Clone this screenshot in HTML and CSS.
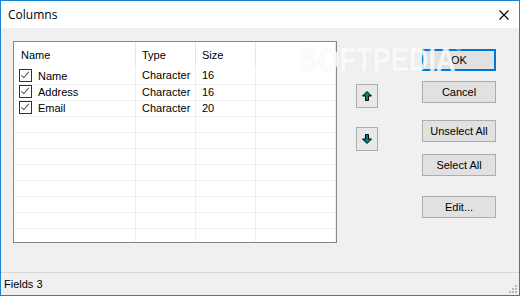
FILE: index.html
```html
<html>
<head>
    <title>Columns</title>
    <link rel="stylesheet" href="styles.css">
</head>
<body>
<div class="window">
    <div class="titlebar">
        <span class="title">Columns</span>
        <svg class="close" width="10" height="10" viewBox="0 0 10 10">
            <path d="M0.5 0.5 L9.5 9.5 M9.5 0.5 L0.5 9.5" stroke="#000" stroke-width="1.1" fill="none"/>
        </svg>
    </div>

    <div class="content">
        <div class="list">
            <table class="grid">
                <tr class="head">
                    <th class="c1">Name</th>
                    <th class="c2">Type</th>
                    <th class="c3">Size</th>
                    <th class="c4"></th>
                </tr>
                <tr>
                    <td class="c1"><span class="check"></span>Name</td>
                    <td class="c2">Character</td>
                    <td class="c3">16</td>
                    <td></td>
                </tr>
                <tr>
                    <td class="c1"><span class="check"></span>Address</td>
                    <td class="c2">Character</td>
                    <td class="c3">16</td>
                    <td></td>
                </tr>
                <tr>
                    <td class="c1"><span class="check"></span>Email</td>
                    <td class="c2">Character</td>
                    <td class="c3">20</td>
                    <td></td>
                </tr>
                <tr><td></td><td></td><td></td><td></td></tr>
                <tr><td></td><td></td><td></td><td></td></tr>
                <tr><td></td><td></td><td></td><td></td></tr>
                <tr><td></td><td></td><td></td><td></td></tr>
                <tr><td></td><td></td><td></td><td></td></tr>
                <tr><td></td><td></td><td></td><td></td></tr>
                <tr><td></td><td></td><td></td><td></td></tr>
                <tr><td></td><td></td><td></td><td></td></tr>
            </table>
        </div>

        <div class="arrows">
            <div class="arrow-btn">
                <svg width="10" height="10" viewBox="0 0 10 10">
                    <path d="M5 0.5 L9.5 5 L6.5 5 L6.5 9.5 L3.5 9.5 L3.5 5 L0.5 5 Z" fill="#008080" stroke="#000" stroke-width="1"/>
                </svg>
            </div>
            <div class="arrow-btn">
                <svg width="10" height="10" viewBox="0 0 10 10">
                    <path d="M5 9.5 L9.5 5 L6.5 5 L6.5 0.5 L3.5 0.5 L3.5 5 L0.5 5 Z" fill="#008080" stroke="#000" stroke-width="1"/>
                </svg>
            </div>
        </div>

        <div class="buttons">
            <div class="btn default">OK</div>
            <div class="btn cancel">Cancel</div>
            <div class="btn unselect">Unselect All</div>
            <div class="btn select">Select All</div>
            <div class="btn edit">Edit...</div>
        </div>

        <div class="watermark">SOFTPEDIA<sup>&reg;</sup></div>
    </div>

    <div class="status">
        <span>Fields 3</span>
        <svg class="grip" width="9" height="9" viewBox="0 0 9 9">
            <rect x="6" y="0" width="2" height="2" fill="#b8b8b8"/>
            <rect x="3" y="3" width="2" height="2" fill="#b8b8b8"/>
            <rect x="6" y="3" width="2" height="2" fill="#b8b8b8"/>
            <rect x="0" y="6" width="2" height="2" fill="#b8b8b8"/>
            <rect x="3" y="6" width="2" height="2" fill="#b8b8b8"/>
            <rect x="6" y="6" width="2" height="2" fill="#b8b8b8"/>
        </svg>
    </div>
</div>
</body>
</html>
```

FILE: styles.css
```css
body {
    margin: 0;
    font-family: "Liberation Sans", Arial, sans-serif;
    font-size: 11px;
    color: #000;
}

table {
    font-size: inherit;
    font-family: inherit;
}

.window {
    width: 520px;
    height: 296px;
    box-sizing: border-box;
    border: 1px solid #1883d7;
    display: flex;
    flex-direction: column;
    background-color: #f0f0f0;
}

.titlebar {
    height: 27px;
    background-color: white;
    display: flex;
    align-items: center;
    justify-content: space-between;
    padding: 0 10px 0 7px;
}

.title {
    font-family: "Open Sans", "Noto Sans", sans-serif;
    font-size: 12px;
    margin-top: -1px;
}

.close {
    margin-top: 1px;
}

.content {
    position: relative;
    height: 244px;
    display: flex;
    padding: 13px 0 0 12px;
    box-sizing: border-box;
}

.list {
    width: 324px;
    height: 202px;
    box-sizing: border-box;
    border: 1px solid #828790;
    background-color: white;
    overflow: hidden;
}

.grid {
    border-collapse: collapse;
    table-layout: fixed;
    width: 322px;
    line-height: 13px;
}

.grid td, .grid th {
    padding: 0 0 0 6px;
    height: 16px;
    border-bottom: 1px solid #f0f0f0;
    border-right: 1px solid #f0f0f0;
    text-align: left;
    font-weight: normal;
    white-space: nowrap;
    overflow: hidden;
}

.grid .head th {
    height: 26px;
    border-bottom: none;
    border-right: 1px solid #e5e5e5;
    padding-top: 0;
}

.grid .c1 {
    width: 114px;
    padding-left: 7px;
}

.grid td.c1 {
    padding-left: 5px;
}

.grid .c2, .grid .c3 {
    width: 53px;
}

.check {
    display: inline-block;
    width: 11px;
    height: 11px;
    border: 1px solid #333;
    vertical-align: -2px;
    margin-right: 6px;
    position: relative;
}

.check::after {
    content: "";
    position: absolute;
    left: 3px;
    top: 0px;
    width: 3px;
    height: 7px;
    border-right: 1px solid #555;
    border-bottom: 1px solid #555;
    transform: rotate(40deg);
}

.arrows {
    display: flex;
    flex-direction: column;
    gap: 19px;
    padding-top: 43px;
    margin-left: 19px;
}

.arrow-btn {
    width: 22px;
    height: 24px;
    box-sizing: border-box;
    border: 1px solid #adadad;
    background-color: #e8e8e8;
    display: flex;
    align-items: center;
    justify-content: center;
}

.buttons {
    display: flex;
    flex-direction: column;
    padding-top: 8px;
    margin-left: 44px;
}

.btn {
    width: 74px;
    height: 22px;
    box-sizing: border-box;
    border: 1px solid #adadad;
    background-color: #e1e1e1;
    display: flex;
    align-items: center;
    justify-content: center;
}

.btn.default {
    border: 2px solid #0078d7;
}

.btn.cancel {
    margin-top: 10px;
}

.btn.unselect {
    margin-top: 17px;
}

.btn.select {
    margin-top: 12px;
}

.btn.edit {
    margin-top: 20px;
}

/* faint watermark sitting over the dialog */
.watermark {
    position: absolute;
    left: 299px;
    top: 12px;
    font-family: "Liberation Sans", Arial, sans-serif;
    font-weight: bold;
    font-size: 34px;
    color: rgba(255, 255, 255, 0.8);
    text-shadow: 0 0 2px rgba(205, 205, 205, 0.35);
    transform: scaleX(0.8);
    transform-origin: left top;
    pointer-events: none;
}

.watermark sup {
    font-size: 9px;
    vertical-align: 20px;
}

.status {
    flex: 1;
    border-top: 1px solid #d7d7d7;
    display: flex;
    align-items: center;
    justify-content: space-between;
    padding: 0 1px 0 3px;
}

.status .grip {
    align-self: flex-end;
    margin-bottom: 1px;
}
```
